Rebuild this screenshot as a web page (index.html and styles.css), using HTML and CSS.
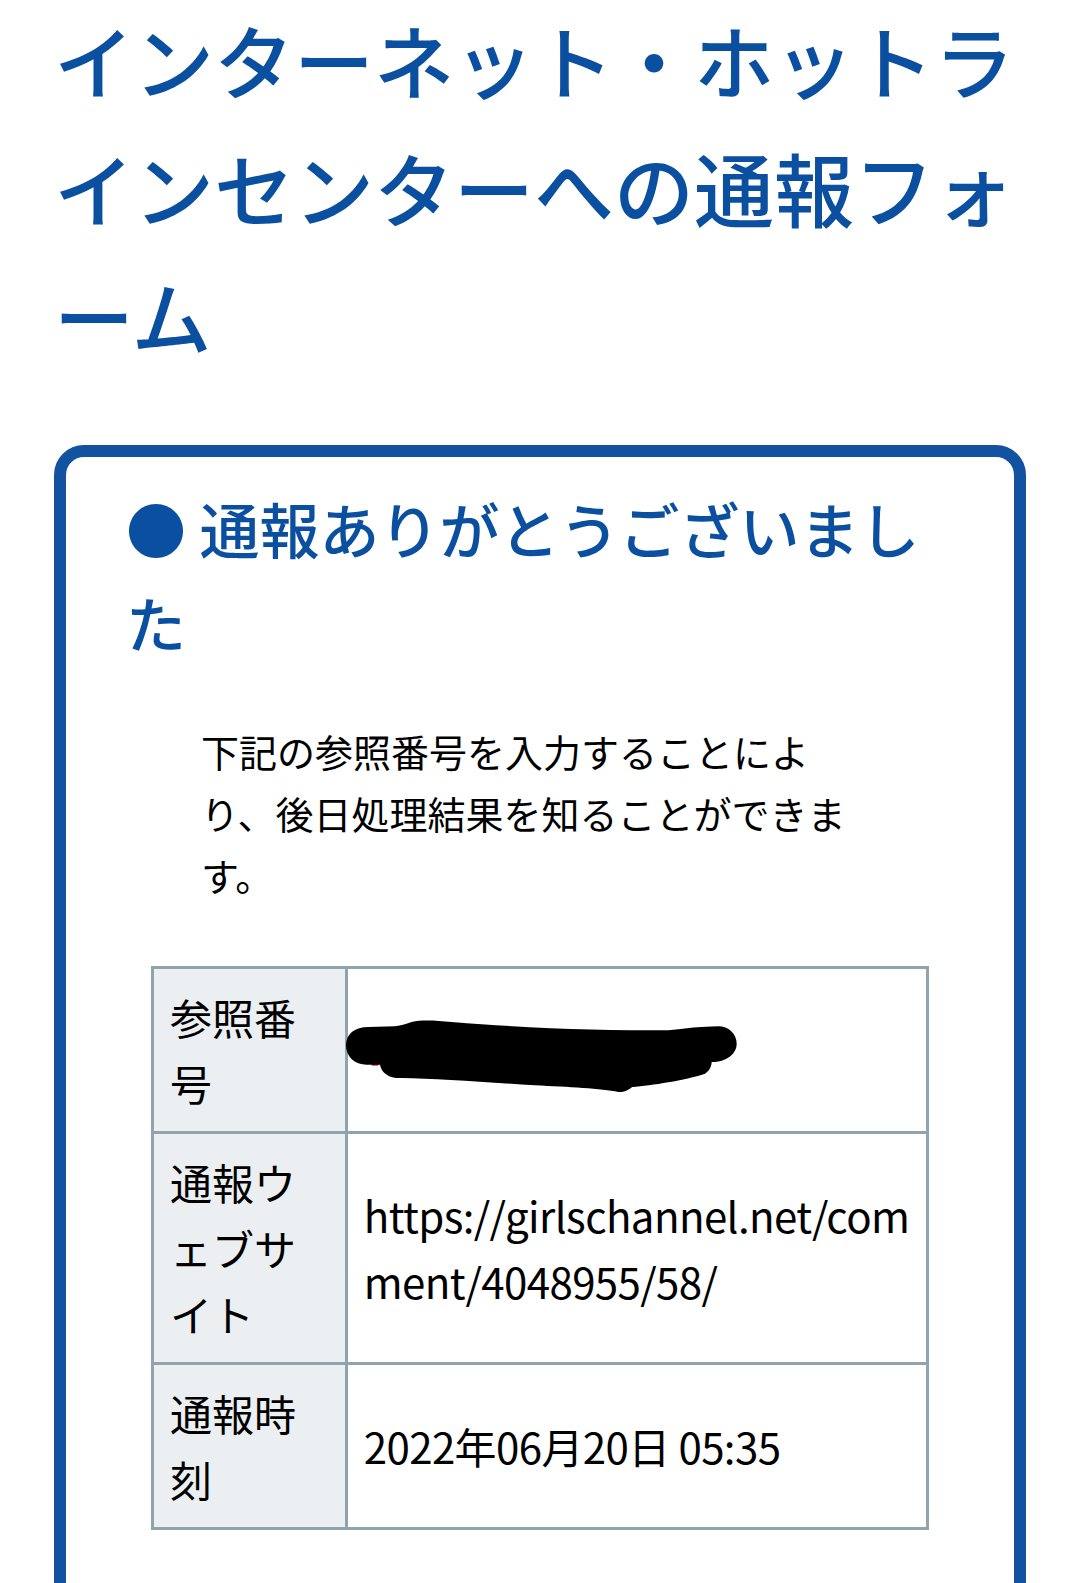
FILE: index.html
```html
<!DOCTYPE html>
<html lang="ja">
<head>
<meta charset="utf-8">
<title>インターネット・ホットラインセンターへの通報フォーム</title>
<link rel="stylesheet" href="styles.css">
</head>
<body>
<main class="page">
  <h1 class="title">インターネット・ホットラインセンターへの通報フォーム</h1>
  <section class="card">
    <h2 class="card-heading">● 通報ありがとうございました</h2>
    <p class="note">下記の参照番号を入力することにより、後日処理結果を知ることができます。</p>
    <div class="table-wrap">
      <table class="result">
        <tr>
          <th>参照番号</th>
          <td class="redacted">
            <svg class="scribble" width="410" height="100" viewBox="0 0 1230 300" aria-hidden="true">
              <rect x="110" y="196" width="20" height="10" fill="#e0201c"/>
              <path fill="#000" d="M100 90 C60 90 33 110 33 145 C33 180 60 205 100 203 L135 203 C140 230 165 245 200 243 C300 245 450 255 600 265 C700 270 800 275 850 285 C870 287 882 277 892 270 C950 265 1050 250 1110 230 C1125 220 1130 205 1130 195 C1175 195 1205 170 1205 140 C1205 110 1180 88 1150 88 C1100 88 1050 95 1000 100 C800 100 600 95 350 75 C300 70 260 68 230 75 C215 80 200 85 180 88 Z"/>
            </svg>
          </td>
        </tr>
        <tr>
          <th>通報ウェブサイト</th>
          <td class="url">https://girlschannel.net/comment/4048955/58/</td>
        </tr>
        <tr>
          <th>通報時刻</th>
          <td>2022年06月20日 05:35</td>
        </tr>
      </table>
    </div>
  </section>
</main>
</body>
</html>
```

FILE: styles.css
```css
html, body {
  margin: 0;
  padding: 0;
  background: #ffffff;
}

html {
  scrollbar-width: none;
}

html::-webkit-scrollbar {
  display: none;
}

body {
  font-family: "Noto Sans CJK JP", "Noto Sans", sans-serif;
  color: #000;
}

.page {
  padding: 0 54px;
}

.title {
  margin: -6px 0 0;
  font-size: 80px;
  line-height: 128px;
  font-weight: 500;
  color: #0b50a0;
}

.card {
  margin-top: 67px;
  border: 12px solid #1153a1;
  border-radius: 30px;
  padding: 24px 60px 120px;
}

.card-heading {
  margin: 0;
  font-size: 60px;
  line-height: 94px;
  font-weight: 500;
  color: #0b50a0;
}

.note {
  margin: 51px 75px 0;
  font-size: 38px;
  line-height: 62px;
}

.table-wrap {
  margin-top: 60px;
  padding: 0 25px;
}

.result {
  width: 100%;
  border-collapse: collapse;
  table-layout: fixed;
}

.result th,
.result td {
  border: 3px solid #90a4ae;
  padding: 15px 16px;
  font-size: 42px;
  line-height: 66px;
  font-weight: 400;
  text-align: left;
  vertical-align: middle;
}

.result th {
  box-sizing: border-box;
  width: 25%;
  background: #eceff1;
}

.result td {
  letter-spacing: -0.6px;
}

.result td.url {
  word-break: break-all;
}

.result td.redacted {
  position: relative;
}

.scribble {
  position: absolute;
  left: -13px;
  top: 28px;
}
```
